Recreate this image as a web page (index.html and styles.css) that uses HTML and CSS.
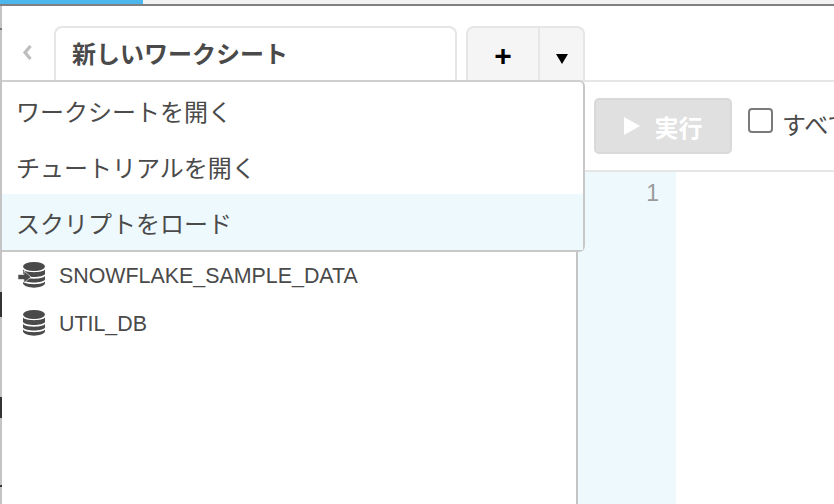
FILE: index.html
```html
<!DOCTYPE html>
<html lang="ja">
<head>
  <meta charset="UTF-8">
  <title>新しいワークシート</title>
  <link rel="stylesheet" href="styles.css">
</head>
<body>
  <div class="window">
    <div class="progress"><div class="progress-fill"></div></div>

    <div class="tabbar">
      <svg class="back" width="10" height="15" viewBox="0 0 10 15">
        <path d="M8.5 1 L3 7.5 L8.5 14" fill="none" stroke="#bdbdbd" stroke-width="3.2"/>
      </svg>
      <div class="tab">新しいワークシート</div>
      <div class="tab-actions">
        <div class="tab-add">+</div>
        <div class="tab-menu"><span class="caret"></span></div>
      </div>
    </div>

    <div class="content">
      <div class="sidebar">
        <ul class="db-list">
          <li>
            <svg class="db-icon" width="28" height="26" viewBox="0 0 28 26">
              <ellipse cx="16" cy="4.5" rx="11" ry="4.5" fill="#4a4a4a"/>
              <path d="M5 7.5 C7 11 25 11 27 7.5 V12 C25 16 7 16 5 12 Z" fill="#4a4a4a"/>
              <path d="M5 14 C7 17.5 25 17.5 27 14 V17.5 C25 21.5 7 21.5 5 17.5 Z" fill="#4a4a4a"/>
              <path d="M5 19.5 C7 23 25 23 27 19.5 V21.5 C25 27 7 27 5 21.5 Z" fill="#4a4a4a"/>
              <path d="M0 12.5 H6 V9 L13 15 L6 21 V17.5 H0 Z" fill="#4a4a4a" stroke="#fff" stroke-width="0.6"/>
            </svg>
            SNOWFLAKE_SAMPLE_DATA
          </li>
          <li>
            <svg class="db-icon" width="28" height="26" viewBox="0 0 28 26">
              <ellipse cx="16" cy="4.5" rx="11" ry="4.5" fill="#4a4a4a"/>
              <path d="M5 7.5 C7 11 25 11 27 7.5 V12 C25 16 7 16 5 12 Z" fill="#4a4a4a"/>
              <path d="M5 14 C7 17.5 25 17.5 27 14 V17.5 C25 21.5 7 21.5 5 17.5 Z" fill="#4a4a4a"/>
              <path d="M5 19.5 C7 23 25 23 27 19.5 V21.5 C25 27 7 27 5 21.5 Z" fill="#4a4a4a"/>
            </svg>
            UTIL_DB
          </li>
        </ul>
      </div>

      <div class="main">
        <div class="toolbar">
          <button class="run"><span class="run-arrow"></span>実行</button>
          <label class="check-all"><span class="checkbox"></span>すべてのクエリ</label>
        </div>
        <div class="editor">
          <div class="gutter">1</div>
        </div>
      </div>

      <ul class="dropdown">
        <li>ワークシートを開く</li>
        <li>チュートリアルを開く</li>
        <li class="active">スクリプトをロード</li>
      </ul>
    </div>

    <!-- bits of the window behind, showing at the left edge -->
    <span class="edge-mark mark-a"></span>
    <span class="edge-mark mark-b"></span>
    <span class="edge-mark mark-c"></span>
    <span class="edge-mark mark-d"></span>
  </div>
</body>
</html>
```

FILE: styles.css
```css
* {
  box-sizing: border-box;
}

html, body {
  margin: 0;
  height: 100%;
  overflow: hidden;
}

body {
  background-color: #fff;
  color: #4a4a4a;
  font-family: "Liberation Sans", "Noto Sans CJK JP", sans-serif;
}

.window {
  height: 504px;
  display: flex;
  flex-direction: column;
  border-left: 2px solid #c4c4c4;
  position: relative;
}

.edge-mark {
  position: absolute;
  left: -2px;
  width: 2px;
  background-color: #333;
}

.mark-a {
  top: 28px;
  height: 2px;
  background-color: #777;
}

.mark-b {
  top: 292px;
  height: 25px;
}

.mark-c {
  top: 397px;
  height: 21px;
}

.mark-d {
  top: 485px;
  height: 2px;
}

.progress {
  height: 6px;
  margin-left: -2px;
  background-color: #f2f2f2;
  border-bottom: 2px solid #808080;
}

.progress-fill {
  width: 143px;
  height: 4px;
  background-color: #4db6ec;
}

.tabbar {
  height: 76px;
  display: flex;
  align-items: flex-end;
  border-bottom: 2px solid #e6e6e6;
}

.back {
  margin: 0 22px 20px 20px;
}

.tab {
  width: 403px;
  height: 54px;
  padding: 0 16px;
  font-size: 24px;
  font-weight: 700;
  line-height: 54px;
  background-color: #fff;
  border: 2px solid #e6e6e6;
  border-bottom: none;
  border-radius: 8px 8px 0 0;
}

.tab-actions {
  display: flex;
  height: 54px;
  margin-left: 9px;
  background-color: #f5f5f5;
  border: 2px solid #e6e6e6;
  border-bottom: none;
  border-radius: 8px 8px 0 0;
}

.tab-add {
  width: 72px;
  color: #000;
  font-size: 30px;
  font-weight: 700;
  line-height: 56px;
  text-align: center;
  border-right: 2px solid #e6e6e6;
}

.tab-menu {
  width: 43px;
  display: flex;
  align-items: center;
  justify-content: center;
  padding-top: 10px;
}

.caret {
  border-left: 6px solid transparent;
  border-right: 6px solid transparent;
  border-top: 10px solid #000;
}

.content {
  flex: 1;
  display: flex;
  position: relative;
  min-height: 0;
}

.sidebar {
  width: 576px;
  padding-top: 169px;
  border-right: 2px solid #c4c4c4;
}

.db-list {
  list-style: none;
  margin: 0;
  padding: 0;
}

.db-list li {
  height: 48px;
  display: flex;
  align-items: center;
  padding: 2px 0 0 16px;
  font-size: 21.4px;
}

.db-icon {
  margin: 0 13px 2px 0;
}

.main {
  flex: 1;
  display: flex;
  flex-direction: column;
  min-width: 0;
}

.toolbar {
  height: 90px;
  flex-shrink: 0;
  display: flex;
  align-items: center;
  padding-left: 16px;
  border-bottom: 2px solid #e6e6e6;
  white-space: nowrap;
}

.run {
  width: 138px;
  height: 56px;
  flex-shrink: 0;
  display: flex;
  align-items: center;
  justify-content: center;
  color: #fff;
  font-family: inherit;
  font-size: 24px;
  font-weight: 700;
  background-color: #e0e0e0;
  border: 2px solid #d9d9d9;
  border-radius: 5px;
}

.run-arrow {
  margin-right: 15px;
  border-top: 9.5px solid transparent;
  border-bottom: 9.5px solid transparent;
  border-left: 16px solid #fff;
}

.check-all {
  display: flex;
  align-items: center;
  margin: 0 0 6px 16px;
  font-size: 24px;
}

.checkbox {
  width: 25px;
  height: 25px;
  margin: 0 9px 6px 0;
  border: 2px solid #7a7a7a;
  border-radius: 4px;
}

.editor {
  flex: 1;
  display: flex;
}

.gutter {
  width: 98px;
  padding: 8px 17px 0 0;
  color: #9b9b9b;
  font-size: 23px;
  text-align: right;
  background-color: #edf9fc;
}

.dropdown {
  position: absolute;
  top: -2px;
  left: 0;
  width: 583px;
  list-style: none;
  margin: 0;
  padding: 0;
  font-size: 24px;
  background-color: #fff;
  border-top: 2px solid #cfcfcf;
  border-right: 2px solid #c8c8c8;
  border-bottom: 2px solid #c8c8c8;
  border-radius: 0 6px 6px 0;
}

.dropdown li {
  height: 56px;
  padding-left: 14px;
  line-height: 61px;
}

.dropdown .active {
  background-color: #edf9fc;
}
```
